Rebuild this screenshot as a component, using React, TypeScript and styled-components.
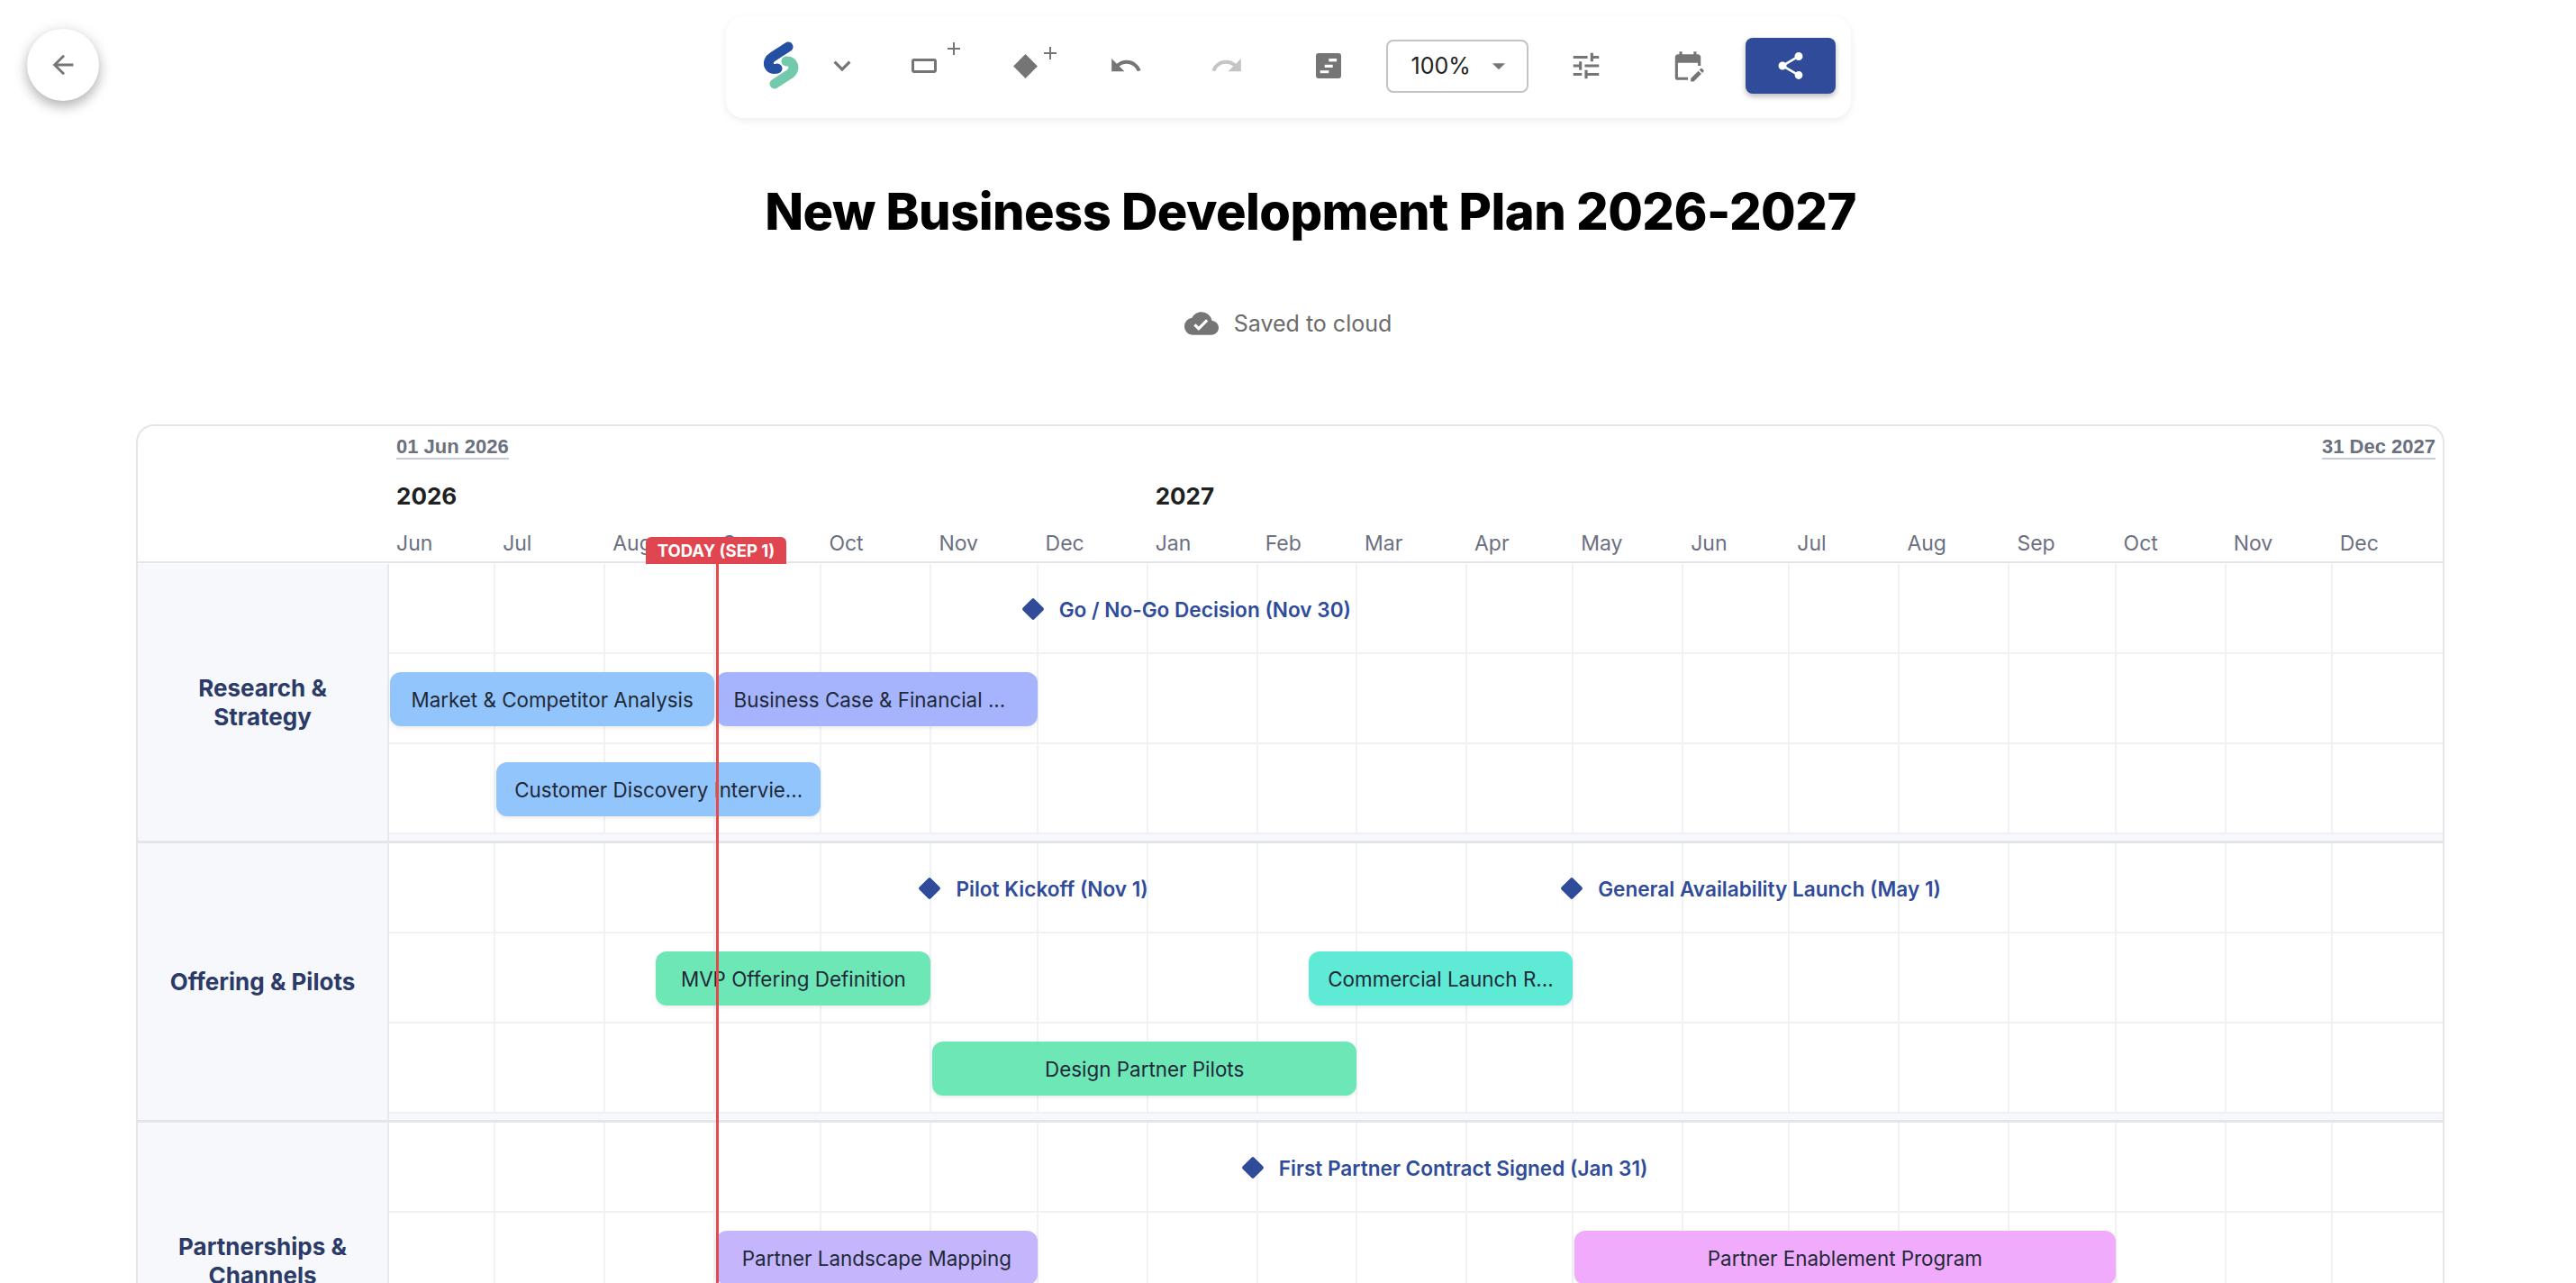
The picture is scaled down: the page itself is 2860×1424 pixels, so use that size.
import React from "react";
import styled, { createGlobalStyle } from "styled-components";
import {
  MdArrowBack,
  MdKeyboardArrowDown,
  MdAdd,
  MdUndo,
  MdRedo,
  MdArrowDropDown,
  MdTune,
  MdEditCalendar,
  MdShare,
  MdCloudDone,
} from "react-icons/md";

const DAY = 3.938;
const TOTAL_DAYS = 579;

const dayOf = (y: number, m: number, d: number) =>
  Math.round((Date.UTC(y, m - 1, d) - Date.UTC(2026, 5, 1)) / 86400000);

const MONTHS: { label: string; days: number }[] = [
  { label: "Jun", days: 30 },
  { label: "Jul", days: 31 },
  { label: "Aug", days: 31 },
  { label: "Sep", days: 30 },
  { label: "Oct", days: 31 },
  { label: "Nov", days: 30 },
  { label: "Dec", days: 31 },
  { label: "Jan", days: 31 },
  { label: "Feb", days: 28 },
  { label: "Mar", days: 31 },
  { label: "Apr", days: 30 },
  { label: "May", days: 31 },
  { label: "Jun", days: 30 },
  { label: "Jul", days: 31 },
  { label: "Aug", days: 31 },
  { label: "Sep", days: 30 },
  { label: "Oct", days: 31 },
  { label: "Nov", days: 30 },
  { label: "Dec", days: 31 },
];

type BarData = { kind: "bar"; text: string; start: number; end: number; color: string; trim?: number };
type MilestoneData = { kind: "milestone"; text: string; at: number };
type Item = BarData | MilestoneData;

const SECTIONS: { title: string[]; lanes: Item[][] }[] = [
  {
    title: ["Research &", "Strategy"],
    lanes: [
      [{ kind: "milestone", text: "Go / No-Go Decision (Nov 30)", at: dayOf(2026, 11, 30) }],
      [
        { kind: "bar", text: "Market & Competitor Analysis", start: dayOf(2026, 6, 1), end: dayOf(2026, 9, 1), color: "#93c5fd" },
        { kind: "bar", text: "Business Case & Financial ...", start: dayOf(2026, 9, 1), end: dayOf(2026, 12, 1), color: "#a5b4fc", trim: 16 },
      ],
      [{ kind: "bar", text: "Customer Discovery Intervie...", start: dayOf(2026, 7, 1), end: dayOf(2026, 10, 1), color: "#93c5fd" }],
    ],
  },
  {
    title: ["Offering & Pilots"],
    lanes: [
      [
        { kind: "milestone", text: "Pilot Kickoff (Nov 1)", at: dayOf(2026, 11, 1) },
        { kind: "milestone", text: "General Availability Launch (May 1)", at: dayOf(2027, 5, 1) },
      ],
      [
        { kind: "bar", text: "MVP Offering Definition", start: dayOf(2026, 8, 15), end: dayOf(2026, 11, 1), color: "#6ee7b7" },
        { kind: "bar", text: "Commercial Launch R...", start: dayOf(2027, 2, 15), end: dayOf(2027, 5, 1), color: "#5eead4" },
      ],
      [{ kind: "bar", text: "Design Partner Pilots", start: dayOf(2026, 11, 1), end: dayOf(2027, 3, 1), color: "#6ee7b7" }],
    ],
  },
  {
    title: ["Partnerships &", "Channels"],
    lanes: [
      [{ kind: "milestone", text: "First Partner Contract Signed (Jan 31)", at: dayOf(2027, 1, 31) }],
      [
        { kind: "bar", text: "Partner Landscape Mapping", start: dayOf(2026, 9, 1), end: dayOf(2026, 12, 1), color: "#c4b5fd" },
        { kind: "bar", text: "Partner Enablement Program", start: dayOf(2027, 5, 1), end: dayOf(2027, 10, 1), color: "#f0abfc" },
      ],
      [],
    ],
  },
];

const GlobalStyle = createGlobalStyle`
  html, body {
    margin: 0;
    height: 100%;
    overflow: hidden;
    background: #ffffff;
    font-family: Inter, "Liberation Sans", sans-serif;
  }
  * { box-sizing: border-box; }
`;

const Page = styled.div`
  position: relative;
  height: 1424px;
  overflow: hidden;
  display: flex;
  flex-direction: column;
  align-items: center;
`;

const BackButton = styled.button`
  position: absolute;
  left: 30px;
  top: 32px;
  width: 80px;
  height: 80px;
  border: 0;
  border-radius: 50%;
  background: #ffffff;
  color: #757575;
  display: flex;
  align-items: center;
  justify-content: center;
  box-shadow: 0 6px 14px rgba(0, 0, 0, 0.28), 0 0 20px rgba(0, 0, 0, 0.06);
`;

const Toolbar = styled.div`
  margin-top: 18px;
  width: 1249px;
  height: 113px;
  padding: 0 17px 3px 27px;
  flex: none;
  display: flex;
  align-items: center;
  background: #ffffff;
  border-radius: 20px;
  box-shadow: 0 3px 10px rgba(0, 0, 0, 0.07);
`;

const Slot = styled.div<{ $w: number; $faded?: boolean }>`
  position: relative;
  flex: none;
  width: ${(p) => p.$w}px;
  height: 60px;
  display: flex;
  align-items: center;
  justify-content: center;
  color: ${(p) => (p.$faded ? "#c4c4c4" : "#757575")};
`;

const PlusMark = styled.span<{ $x: number; $y: number }>`
  position: absolute;
  left: ${(p) => p.$x}px;
  top: ${(p) => p.$y}px;
  display: flex;
  color: #757575;
`;

const RectGlyph = styled.span`
  width: 28px;
  height: 16px;
  border: 3px solid #757575;
  border-radius: 3px;
`;

const DiamondGlyph = styled.span`
  width: 19px;
  height: 19px;
  background: #757575;
  transform: rotate(45deg);
`;

const ZoomBox = styled.div`
  flex: none;
  margin-left: 6px;
  width: 158px;
  height: 59px;
  padding: 0 14px 0 26px;
  display: flex;
  align-items: center;
  justify-content: space-between;
  border: 2px solid #c4c4c4;
  border-radius: 8px;
  color: #212121;
  font-size: 25px;
  font-weight: 400;
  & svg { color: #757575; }
`;

const ShareButton = styled.button`
  flex: none;
  margin-left: 15px;
  width: 100px;
  height: 62px;
  border: 0;
  border-radius: 8px;
  background: #2f4b99;
  color: #ffffff;
  display: flex;
  align-items: center;
  justify-content: center;
  box-shadow: 0 3px 6px rgba(0, 0, 0, 0.28);
`;

const Title = styled.h1`
  margin: 69px 0 0 50px;
  height: 70px;
  flex: none;
  font-size: 56px;
  line-height: 70px;
  font-weight: 800;
  letter-spacing: -0.55px;
  color: #000000;
  white-space: nowrap;
`;

const SaveStatus = styled.div`
  margin-top: 71px;
  height: 36px;
  flex: none;
  display: flex;
  align-items: center;
  gap: 17px;
  font-size: 25px;
  color: #6b6b6b;
  & svg { color: #757575; }
`;

const Card = styled.div`
  position: relative;
  margin-top: 94px;
  margin-left: 5px;
  width: 2563px;
  flex: none;
  border: 2px solid #e3e5ea;
  border-bottom: 0;
  border-radius: 20px 20px 0 0;
  background: #ffffff;
`;

const Header = styled.div`
  height: 152px;
  margin-bottom: 1px;
  padding: 9px 0 0 279px;
  border-bottom: 2px solid #e3e5ea;
`;

const RangeRow = styled.div`
  height: 28px;
  padding: 0 8px;
  display: flex;
  justify-content: space-between;
  align-items: flex-end;
`;

const RangeDate = styled.span`
  font-family: "Liberation Sans", Arial, sans-serif;
  font-size: 22px;
  line-height: 24px;
  font-weight: 700;
  color: #6b7080;
  border-bottom: 2px solid #c9cade;
  white-space: nowrap;
`;

const DayGrid = styled.div`
  display: grid;
  grid-template-columns: repeat(${TOTAL_DAYS}, ${DAY}px);
`;

const YearRow = styled(DayGrid)`
  margin-top: 24px;
  height: 34px;
  align-items: center;
`;

const YearLabel = styled.div<{ $start: number }>`
  grid-row: 1;
  grid-column: ${(p) => p.$start + 1} / span 60;
  padding-left: 8px;
  font-size: 26px;
  line-height: 34px;
  font-weight: 700;
  color: #212121;
`;

const MonthRow = styled(DayGrid)`
  margin-top: 20px;
  height: 30px;
`;

const MonthLabel = styled.div<{ $days: number }>`
  grid-column: span ${(p) => p.$days};
  padding-left: 8px;
  font-size: 23px;
  line-height: 30px;
  color: #6b7080;
`;

const TodayFlag = styled.div`
  position: absolute;
  z-index: 4;
  left: 564px;
  top: 123px;
  width: 156px;
  height: 30px;
  display: flex;
  align-items: center;
  justify-content: center;
  border-radius: 6px 6px 0 0;
  background: #e0464f;
  color: #ffffff;
  font-size: 18.5px;
  font-weight: 700;
  white-space: nowrap;
`;

const TodayLine = styled.div`
  position: absolute;
  z-index: 4;
  left: 642px;
  top: 152px;
  bottom: 0;
  width: 3px;
  background: #e5484d;
`;

const Section = styled.div`
  display: flex;
  height: 310px;
  border-bottom: 3px solid #e3e5ea;
`;

const SectionLabel = styled.div`
  flex: none;
  width: 279px;
  display: flex;
  flex-direction: column;
  align-items: center;
  justify-content: center;
  background: #f6f8fc;
  border-right: 2px solid #e8e9ee;
  color: #2b3a67;
  font-size: 26px;
  line-height: 32px;
  font-weight: 700;
  text-align: center;
`;

const Timeline = styled.div`
  position: relative;
  flex: 1;
  background: #f7f8fb;
`;

const GridLayer = styled(DayGrid)`
  position: absolute;
  inset: 0 0 8px 0;
  background: #ffffff;
`;

const GridCell = styled.div<{ $days: number }>`
  grid-column: span ${(p) => p.$days};
  border-right: 2px solid #f1f2f5;
  &:last-child { border-right: 0; }
`;

const Lane = styled(DayGrid)`
  position: relative;
  height: 100px;
  padding-top: 2px;
  align-items: center;
  border-bottom: 2px solid #f0f1f4;
`;

const Bar = styled.div<{ $start: number; $end: number; $color: string; $trim: number }>`
  grid-row: 1;
  grid-column: ${(p) => p.$start + 1} / ${(p) => p.$end + 1};
  height: 60px;
  margin: 0 1px;
  padding: 0 ${(p) => p.$trim}px 0 0;
  min-width: 0;
  display: flex;
  align-items: center;
  justify-content: center;
  border-radius: 12px;
  background: ${(p) => p.$color};
  box-shadow: 0 2px 4px rgba(0, 0, 0, 0.08);
  color: #1f2937;
  font-size: 22.4px;
  white-space: nowrap;
  overflow: hidden;
`;

const Milestone = styled.div<{ $at: number }>`
  grid-row: 1;
  grid-column: ${(p) => p.$at + 1} / span 1;
  margin-left: -14px;
  display: flex;
  align-items: center;
  gap: 17px;
  width: max-content;
  color: #2f4b99;
  font-size: 22.6px;
  font-weight: 600;
  white-space: nowrap;
`;

const Diamond = styled.span`
  flex: none;
  width: 18px;
  height: 18px;
  margin: 0 3px;
  border-radius: 2px;
  background: #2f4b99;
  transform: rotate(45deg);
`;

const Logo = () => (
  <svg width="40" height="54" viewBox="0 0 40 54" fill="none">
    <path d="M12 47 L29 36 C36 31 33 21 25 22" stroke="#73c9ab" strokeWidth="11" strokeLinecap="round" />
    <path d="M27 6 L10 17 C2 22 5 33 15 30" stroke="#2450a4" strokeWidth="11" strokeLinecap="round" />
  </svg>
);

const TimelineGlyph = () => (
  <svg width="28" height="28" viewBox="0 0 28 28">
    <rect width="28" height="28" rx="3" fill="#757575" />
    <rect x="14.3" y="6" width="8.8" height="3.4" fill="#fff" />
    <rect x="9.7" y="12.8" width="9" height="3.2" fill="#fff" />
    <rect x="4.7" y="19.2" width="9.6" height="3" fill="#fff" />
  </svg>
);

const GridLines = () => (
  <GridLayer>
    {MONTHS.map((m, i) => (
      <GridCell key={i} $days={m.days} />
    ))}
  </GridLayer>
);

export default function App() {
  return (
    <Page>
      <GlobalStyle />
      <BackButton aria-label="Back">
        <MdArrowBack size={34} />
      </BackButton>
      <Toolbar>
        <Slot $w={70}>
          <Logo />
        </Slot>
        <Slot $w={64}>
          <MdKeyboardArrowDown size={38} />
        </Slot>
        <Slot $w={118}>
          <RectGlyph />
          <PlusMark $x={80} $y={-1}>
            <MdAdd size={24} />
          </PlusMark>
        </Slot>
        <Slot $w={108}>
          <DiamondGlyph />
          <PlusMark $x={69} $y={4}>
            <MdAdd size={24} />
          </PlusMark>
        </Slot>
        <Slot $w={114}>
          <MdUndo size={38} />
        </Slot>
        <Slot $w={110} $faded>
          <MdRedo size={38} />
        </Slot>
        <Slot $w={116}>
          <TimelineGlyph />
        </Slot>
        <ZoomBox>
          100%
          <MdArrowDropDown size={34} />
        </ZoomBox>
        <Slot $w={128}>
          <MdTune size={38} />
        </Slot>
        <Slot $w={98}>
          <MdEditCalendar size={38} />
        </Slot>
        <ShareButton aria-label="Share">
          <MdShare size={36} />
        </ShareButton>
      </Toolbar>
      <Title>New Business Development Plan 2026-2027</Title>
      <SaveStatus>
        <MdCloudDone size={38} />
        Saved to cloud
      </SaveStatus>
      <Card>
        <Header>
          <RangeRow>
            <RangeDate>01 Jun 2026</RangeDate>
            <RangeDate>31 Dec 2027</RangeDate>
          </RangeRow>
          <YearRow>
            <YearLabel $start={0}>2026</YearLabel>
            <YearLabel $start={dayOf(2027, 1, 1)}>2027</YearLabel>
          </YearRow>
          <MonthRow>
            {MONTHS.map((m, i) => (
              <MonthLabel key={i} $days={m.days}>
                {m.label}
              </MonthLabel>
            ))}
          </MonthRow>
        </Header>
        <TodayFlag>TODAY (SEP 1)</TodayFlag>
        <TodayLine />
        {SECTIONS.map((s) => (
          <Section key={s.title[0]}>
            <SectionLabel>
              {s.title.map((t) => (
                <div key={t}>{t}</div>
              ))}
            </SectionLabel>
            <Timeline>
              <GridLines />
              {s.lanes.map((lane, i) => (
                <Lane key={i}>
                  {lane.map((it) =>
                    it.kind === "bar" ? (
                      <Bar key={it.text} $start={it.start} $end={it.end} $color={it.color} $trim={it.trim ?? 0}>
                        {it.text}
                      </Bar>
                    ) : (
                      <Milestone key={it.text} $at={it.at}>
                        <Diamond />
                        {it.text}
                      </Milestone>
                    )
                  )}
                </Lane>
              ))}
            </Timeline>
          </Section>
        ))}
      </Card>
    </Page>
  );
}
